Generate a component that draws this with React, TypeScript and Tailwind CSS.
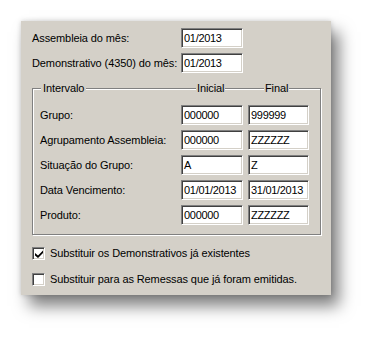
import React from "react";

const font = { fontFamily: '"Liberation Sans", Arial, sans-serif' };

const Field = ({ value, w = "w-[62px]" }: { value: string; w?: string }) => (
  <div
    className={`${w} h-[20px] bg-white border border-t-[#808080] border-l-[#808080] border-b-white border-r-white shadow-[inset_1px_1px_0_#404040,inset_-1px_-1px_0_#d4d0c8] flex items-center pl-[2px] text-[11px] tracking-[-0.3px] text-black leading-none overflow-hidden whitespace-nowrap`}
  >
    {value}
  </div>
);

const rows = [
  { label: "Grupo:", from: "000000", to: "999999" },
  { label: "Agrupamento Assembleia:", from: "000000", to: "ZZZZZZ" },
  { label: "Situação do Grupo:", from: "A", to: "Z" },
  { label: "Data Vencimento:", from: "01/01/2013", to: "31/01/2013" },
  { label: "Produto:", from: "000000", to: "ZZZZZZ" },
];

const Check = ({ checked, label }: { checked: boolean; label: string }) => (
  <div className="flex items-center h-[13px]">
    <div className="w-[13px] h-[13px] bg-white border border-t-[#808080] border-l-[#808080] border-b-white border-r-white shadow-[inset_1px_1px_0_#404040,inset_-1px_-1px_0_#d4d0c8] flex items-center justify-center">
      {checked && (
        <svg width="8" height="8" viewBox="0 0 8 8">
          <path d="M0 3 L3 5.5 L8 0.5 L8 3 L3 8 L0 5.5 Z" fill="#000" />
        </svg>
      )}
    </div>
    <span className="ml-[5px] text-[11px] tracking-[-0.1px] text-black">{label}</span>
  </div>
);

const App: React.FC = () => {
  return (
    <div className="bg-white w-[373px] h-[338px] pt-[21px] pl-[21px]" style={font}>
      {/* Dialog panel */}
      <div className="w-[310px] h-[274px] bg-[#d4d0c8] pt-[7px] pl-[11px] text-[11px] tracking-[-0.1px] shadow-[0_0_5px_rgba(0,0,0,0.18),8px_11px_15px_rgba(0,0,0,0.5)]">
        <div className="flex items-center h-[20px]">
          <span className="w-[149px] text-black">Assembleia do mês:</span>
          <Field value="01/2013" />
        </div>
        <div className="flex items-center h-[20px] mt-[5px]">
          <span className="w-[149px] text-black">Demonstrativo (4350) do mês:</span>
          <Field value="01/2013" />
        </div>

        {/* Intervalo group */}
        <div className="relative mt-[15px] w-[289px] h-[147px] border border-[#808080] shadow-[inset_1px_1px_0_#fff,1px_1px_0_#fff] pt-[16px] pl-[7px]">
          <span className="absolute -top-[7px] left-[8px] px-[2px] bg-[#d4d0c8] leading-[13px] text-black">
            Intervalo
          </span>
          <span className="absolute -top-[7px] left-[163px] px-[1px] bg-[#d4d0c8] leading-[13px] text-black">
            Inicial
          </span>
          <span className="absolute -top-[7px] left-[231px] px-[1px] bg-[#d4d0c8] leading-[13px] text-black">
            Final
          </span>
          <div className="flex flex-col gap-[5px]">
            {rows.map((r) => (
              <div key={r.label} className="flex items-center h-[20px]">
                <span className="w-[141px] text-black">{r.label}</span>
                <Field value={r.from} />
                <div className="w-[5px]" />
                <Field value={r.to} w="w-[61px]" />
              </div>
            ))}
          </div>
        </div>

        <div className="mt-[12px] flex flex-col gap-[13px]">
          <Check checked label="Substituir os Demonstrativos já existentes" />
          <Check checked={false} label="Substituir para as Remessas que já foram emitidas." />
        </div>
      </div>
    </div>
  );
};

export default App;
